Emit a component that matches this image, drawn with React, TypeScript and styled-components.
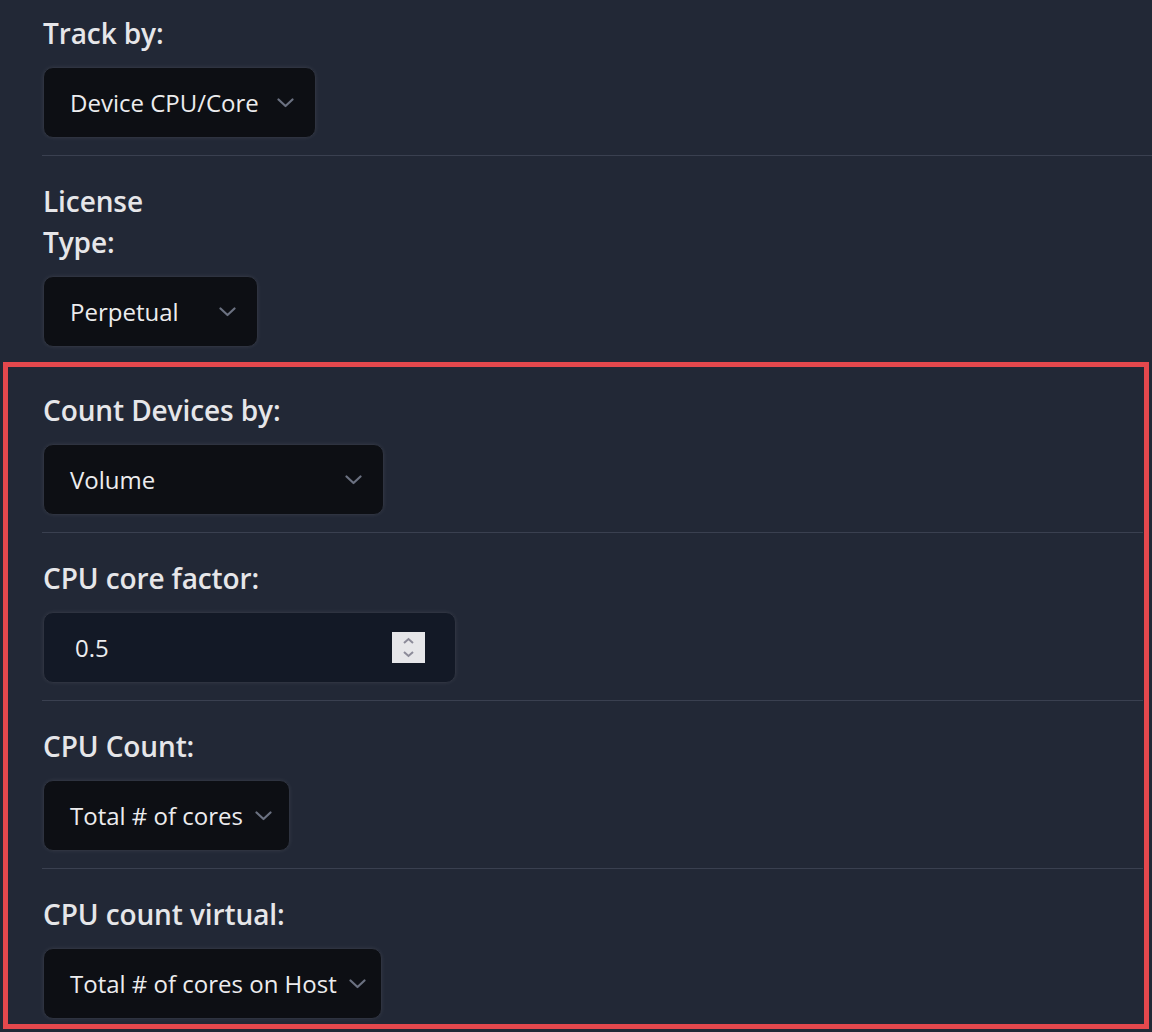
import React from 'react';
import styled, { createGlobalStyle } from 'styled-components';

const GlobalStyle = createGlobalStyle`
  body {
    margin: 0;
    background: #222836;
    font-family: "Open Sans", Lato, sans-serif;
  }
`;

const Page = styled.div`
  display: flex;
  flex-direction: column;
  overflow: hidden;
`;

const Section = styled.div<{ $divider?: boolean; $top?: number; $bottom?: number }>`
  display: flex;
  flex-direction: column;
  align-items: flex-start;
  padding: ${(p) => p.$top ?? 21}px 0 ${(p) => p.$bottom ?? 17}px;
  border-bottom: ${(p) => (p.$divider ? '1px solid #3a4050' : 'none')};
`;

const OuterSection = styled(Section)`
  margin-left: 42px;
`;

const Highlight = styled.div`
  margin: 0 3px 0 3px;
  border: 5px solid #e5484d;
  padding: 0 1px 0 34px;
  display: flex;
  flex-direction: column;
`;

const Label = styled.div<{ $maxWidth?: number }>`
  font-size: 28px;
  font-weight: 600;
  line-height: 41px;
  letter-spacing: -0.1px;
  color: #e6e6e9;
  padding-top: 4px;
  margin-bottom: 13px;
  max-width: ${(p) => (p.$maxWidth ? `${p.$maxWidth}px` : 'none')};
  padding-left: 1px;
`;

const SelectBox = styled.div<{ $width: number }>`
  box-sizing: border-box;
  width: ${(p) => p.$width}px;
  height: 71px;
  display: flex;
  align-items: center;
  justify-content: space-between;
  gap: 12px;
  padding: 0 21px 0 26px;
  background: #0d0f14;
  border: 1.5px solid #2e3340;
  border-radius: 10px;
  box-shadow: 0 0 4px rgba(255, 255, 255, 0.07);
  color: #ececee;
  font-size: 24px;
  margin-left: 1px;
  white-space: nowrap;
`;

const NumberBox = styled(SelectBox)`
  background: #131926;
  padding: 0 30px 0 31px;
`;

const Spinner = styled.div`
  width: 33px;
  height: 31px;
  background: #e6e6e9;
  display: flex;
  align-items: center;
  justify-content: center;
`;

const Chevron = () => (
  <svg width="17" height="10" viewBox="0 0 17 10" fill="none" style={{ flexShrink: 0 }}>
    <polyline points="1.5,1.5 8.5,8 15.5,1.5" stroke="#6b7181" strokeWidth="2.2" strokeLinecap="round" strokeLinejoin="round" />
  </svg>
);

const Select = ({ value, width }: { value: string; width: number }) => (
  <SelectBox $width={width}>
    <span>{value}</span>
    <Chevron />
  </SelectBox>
);

const NumberInput = ({ value, width }: { value: string; width: number }) => (
  <NumberBox $width={width}>
    <span>{value}</span>
    <Spinner>
      <svg width="33" height="31" viewBox="0 0 33 31" fill="none">
        <polyline points="12,11 16.5,7 21,11" stroke="#8c8b99" strokeWidth="2" />
        <polyline points="12,20 16.5,24 21,20" stroke="#8c8b99" strokeWidth="2" />
      </svg>
    </Spinner>
  </NumberBox>
);

export default function App() {
  return (
    <Page>
      <GlobalStyle />
      <OuterSection $divider $top={9}>
        <Label>Track by:</Label>
        <Select value="Device CPU/Core" width={273} />
      </OuterSection>
      <OuterSection $top={21} $bottom={15}>
        <Label $maxWidth={130}>License Type:</Label>
        <Select value="Perpetual" width={215} />
      </OuterSection>
      <Highlight>
        <Section $divider $top={19}>
          <Label>Count Devices by:</Label>
          <Select value="Volume" width={341} />
        </Section>
        <Section $divider>
          <Label>CPU core factor:</Label>
          <NumberInput value="0.5" width={413} />
        </Section>
        <Section $divider>
          <Label>CPU Count:</Label>
          <Select value="Total # of cores" width={247} />
        </Section>
        <Section $bottom={5}>
          <Label>CPU count virtual:</Label>
          <Select value="Total # of cores on Host" width={339} />
        </Section>
      </Highlight>
    </Page>
  );
}
